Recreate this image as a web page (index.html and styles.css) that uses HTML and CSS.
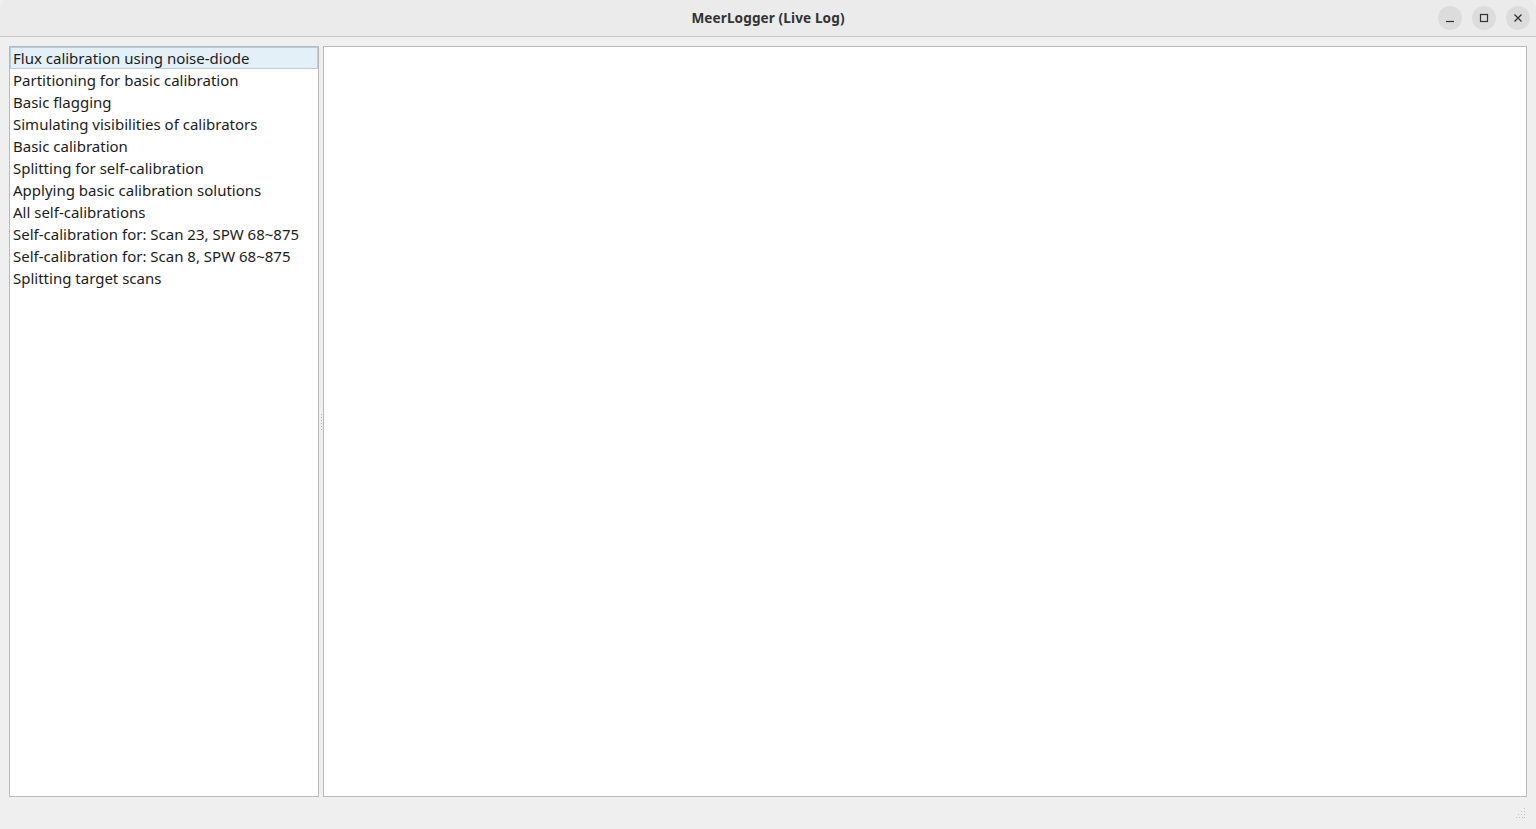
FILE: index.html
```html
<!DOCTYPE html>
<html>
<head>
<meta charset="utf-8">
<title>MeerLogger (Live Log)</title>
<link rel="stylesheet" href="styles.css">
</head>
<body>
<div class="window">
  <header class="titlebar">
    <div class="title">MeerLogger (Live Log)</div>
    <div class="controls">
      <button class="ctl" aria-label="Minimize">
        <svg width="10" height="10" viewBox="0 0 10 10"><path d="M1 8.5h8" stroke="#333" stroke-width="1.2" fill="none"/></svg>
      </button>
      <button class="ctl" aria-label="Maximize">
        <svg width="10" height="10" viewBox="0 0 10 10"><rect x="1.5" y="1.5" width="7" height="7" stroke="#333" stroke-width="1.2" fill="none"/></svg>
      </button>
      <button class="ctl" aria-label="Close">
        <svg width="10" height="10" viewBox="0 0 10 10"><path d="M1.5 1.5l7 7M8.5 1.5l-7 7" stroke="#333" stroke-width="1.3" fill="none"/></svg>
      </button>
    </div>
  </header>
  <main class="content">
    <ul class="list">
      <li class="item selected">Flux calibration using noise-diode</li>
      <li class="item">Partitioning for basic calibration</li>
      <li class="item">Basic flagging</li>
      <li class="item">Simulating visibilities of calibrators</li>
      <li class="item">Basic calibration</li>
      <li class="item">Splitting for self-calibration</li>
      <li class="item">Applying basic calibration solutions</li>
      <li class="item">All self-calibrations</li>
      <li class="item">Self-calibration for: Scan 23, SPW 68~875</li>
      <li class="item">Self-calibration for: Scan 8, SPW 68~875</li>
      <li class="item">Splitting target scans</li>
    </ul>
    <div class="splitter"><span class="dots"></span></div>
    <div class="view"></div>
  </main>
  <footer class="statusbar">
    <svg class="grip" width="10" height="10" viewBox="0 0 10 10">
      <g fill="#c4c4c4">
        <rect x="8" y="0" width="1" height="1"/>
        <rect x="5" y="3" width="1" height="1"/><rect x="8" y="3" width="1" height="1"/>
        <rect x="2" y="6" width="1" height="1"/><rect x="5" y="6" width="1" height="1"/><rect x="8" y="6" width="1" height="1"/>
        <rect x="0" y="9" width="1" height="1"/><rect x="3" y="9" width="1" height="1"/><rect x="6" y="9" width="1" height="1"/><rect x="8" y="9" width="1" height="1"/>
      </g>
    </svg>
  </footer>
</div>
</body>
</html>
```

FILE: styles.css
```css
html, body {
  margin: 0;
  padding: 0;
  height: 100%;
  background: #efefef;
}
body {
  font-family: "Noto Sans", "Open Sans", sans-serif;
  color: #1c1c1c;
  overflow: hidden;
}
.window {
  width: 1536px;
  height: 829px;
  display: flex;
  flex-direction: column;
  background: #efefef;
  border-radius: 8px 8px 0 0;
  overflow: hidden;
}
.titlebar {
  height: 36px;
  flex: 0 0 36px;
  background: #ebebeb;
  border-bottom: 1px solid #c6c6c6;
  display: flex;
  align-items: center;
  justify-content: center;
  position: relative;
}
.title {
  font-weight: 700;
  font-size: 13.6px;
  color: #333;
  letter-spacing: 0.1px;
  margin-top: -2px;
}
.controls {
  position: absolute;
  right: 6px;
  top: 6px;
  display: flex;
  gap: 10px;
}
.ctl {
  width: 24px;
  height: 24px;
  border-radius: 50%;
  border: none;
  background: #dcdcdc;
  padding: 0;
  display: flex;
  align-items: center;
  justify-content: center;
}
.content {
  flex: 1;
  display: flex;
  padding: 9px 9px 0 9px;
  min-height: 0;
}
.list {
  list-style: none;
  margin: 0;
  padding: 0;
  width: 308px;
  height: 749px;
  border: 1px solid #b9b9b9;
  background: #fff;
}
.item {
  height: 22px;
  line-height: 22px;
  padding-left: 3px;
  font-size: 15px;
  white-space: nowrap;
  box-sizing: border-box;
}
.item.selected {
  background: #e4f0f8;
  border: 1px solid #b2cfe2;
  line-height: 20px;
  padding-left: 2px;
}
.splitter {
  width: 4px;
  display: flex;
  align-items: center;
  justify-content: center;
}
.dots {
  width: 1px;
  height: 16px;
  background-image: linear-gradient(#b5b5b5 50%, transparent 50%);
  background-size: 1px 3px;
}
.view {
  width: 1202px;
  height: 749px;
  border: 1px solid #b9b9b9;
  background: #fff;
}
.statusbar {
  height: 32px;
  flex: 0 0 32px;
  position: relative;
}
.grip {
  position: absolute;
  right: 10px;
  bottom: 11px;
}
```
